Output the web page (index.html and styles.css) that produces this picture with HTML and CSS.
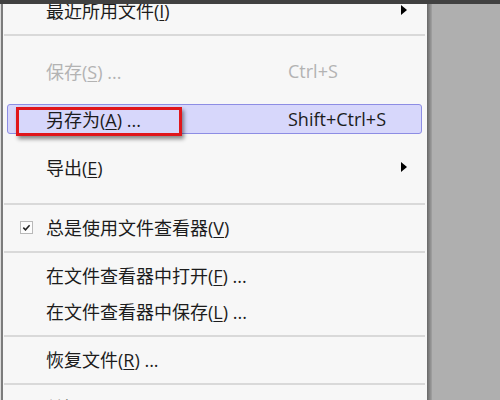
FILE: index.html
```html
<!DOCTYPE html>
<html lang="zh">
<head>
<meta charset="utf-8">
<link rel="stylesheet" href="styles.css">
</head>
<body>
<div class="topbar"></div>
<div class="stage">
  <div class="edge"></div>
  <div class="menu">
    <div class="row first">
      <div class="box">
        <div class="gutter"></div>
        <span class="label">最近所用文件(<u>I</u>)</span>
        <span class="key"></span>
        <span class="arrow"></span>
      </div>
    </div>
    <div class="sep"></div>
    <div class="section">
      <div class="row tall disabled">
        <div class="box">
          <div class="gutter"></div>
          <span class="label">保存(<u>S</u>) ...</span>
          <span class="key">Ctrl+S</span>
        </div>
      </div>
      <div class="row tall">
        <div class="box hover">
          <div class="gutter"></div>
          <span class="label">另存为(<u>A</u>) ...</span>
          <span class="key">Shift+Ctrl+S</span>
        </div>
      </div>
      <div class="row tall">
        <div class="box">
          <div class="gutter"></div>
          <span class="label">导出(<u>E</u>)</span>
          <span class="key"></span>
          <span class="arrow"></span>
        </div>
      </div>
    </div>
    <div class="sep"></div>
    <div class="row">
      <div class="box">
        <div class="gutter"><span class="check"><svg width="11" height="11" viewBox="0 0 11 11"><path d="M2.3 5.6 L4.5 7.8 L8.6 3.2" fill="none" stroke="#222" stroke-width="1.5"/></svg></span></div>
        <span class="label">总是使用文件查看器(<u>V</u>)</span>
      </div>
    </div>
    <div class="sep"></div>
    <div class="row">
      <div class="box">
        <div class="gutter"></div>
        <span class="label wide">在文件查看器中打开(<u>F</u>) ...</span>
      </div>
    </div>
    <div class="row">
      <div class="box">
        <div class="gutter"></div>
        <span class="label wide">在文件查看器中保存(<u>L</u>) ...</span>
      </div>
    </div>
    <div class="sep"></div>
    <div class="row">
      <div class="box">
        <div class="gutter"></div>
        <span class="label">恢复文件(<u>R</u>) ...</span>
      </div>
    </div>
    <div class="sep"></div>
    <div class="row">
      <div class="box">
        <div class="gutter"></div>
        <span class="label">关闭(<u>C</u>)</span>
      </div>
    </div>
    <div class="annot"></div>
  </div>
  <div class="shadow"></div>
  <div class="desk"></div>
</div>
</body>
</html>
```

FILE: styles.css
```css
html, body {
  margin: 0;
  padding: 0;
}
body {
  width: 500px;
  height: 400px;
  overflow: hidden;
  background: #afafaf;
  font-family: "Open Sans", "Noto Sans CJK SC", sans-serif;
  font-size: 18px;
  color: #1c1c1c;
}
.topbar {
  height: 4px;
  background: #414141;
}
.stage {
  display: flex;
  height: 396px;
  overflow: hidden;
}
.edge {
  width: 1px;
  background: #dcdcdc;
  border-right: 2px solid #7c7c7c;
  flex: none;
}
.menu {
  position: relative;
  width: 424px;
  flex: none;
  background: #f7f7f7;
  overflow: hidden;
}
.shadow {
  width: 5px;
  flex: none;
  background: linear-gradient(to right, #686868, #8a8a8a 60%, #a2a2a2);
}
.desk {
  flex: 1;
  background: #afafaf;
}
.row {
  height: 36px;
  display: flex;
  align-items: center;
  padding: 0 5px 0 4px;
}
.row.first {
  margin-top: -12px;
}
.row.tall {
  height: 48px;
}
.section {
  padding: 7px 0 6px;
}
.box {
  flex: 1;
  height: 30px;
  box-sizing: border-box;
  border: 1px solid transparent;
  border-radius: 3px;
  display: flex;
  align-items: center;
}
.box.hover {
  background: #d7d7fb;
  border-color: #8d8de4;
}
.gutter {
  width: 38px;
  flex: none;
  display: flex;
  align-items: center;
  padding-left: 12px;
  box-sizing: border-box;
}
.check {
  width: 13px;
  height: 13px;
  box-sizing: border-box;
  border: 1px solid #b9b9b9;
  background: #fdfdfd;
  display: flex;
  align-items: center;
  justify-content: center;
}
.label {
  width: 242px;
  flex: none;
  white-space: nowrap;
}
.label.wide {
  width: auto;
}
.label u {
  text-underline-offset: 2px;
}
.key {
  flex: 1;
  white-space: nowrap;
}
.disabled {
  color: #b3b3b3;
}
.arrow {
  width: 0;
  height: 0;
  border-left: 6px solid #000;
  border-top: 5px solid transparent;
  border-bottom: 5px solid transparent;
  margin-right: 14px;
}
.sep {
  height: 12px;
  padding-top: 6px;
  box-sizing: border-box;
  margin: 0 2px 0 1px;
}
.sep::before {
  content: "";
  display: block;
  height: 2px;
  background: #d9d9d9;
}
.annot {
  position: absolute;
  left: 13px;
  top: 103px;
  width: 166px;
  height: 29px;
  box-sizing: border-box;
  border: 3px solid #e0161b;
  box-shadow: 2px 3px 4px rgba(0, 0, 0, 0.45);
}
```
